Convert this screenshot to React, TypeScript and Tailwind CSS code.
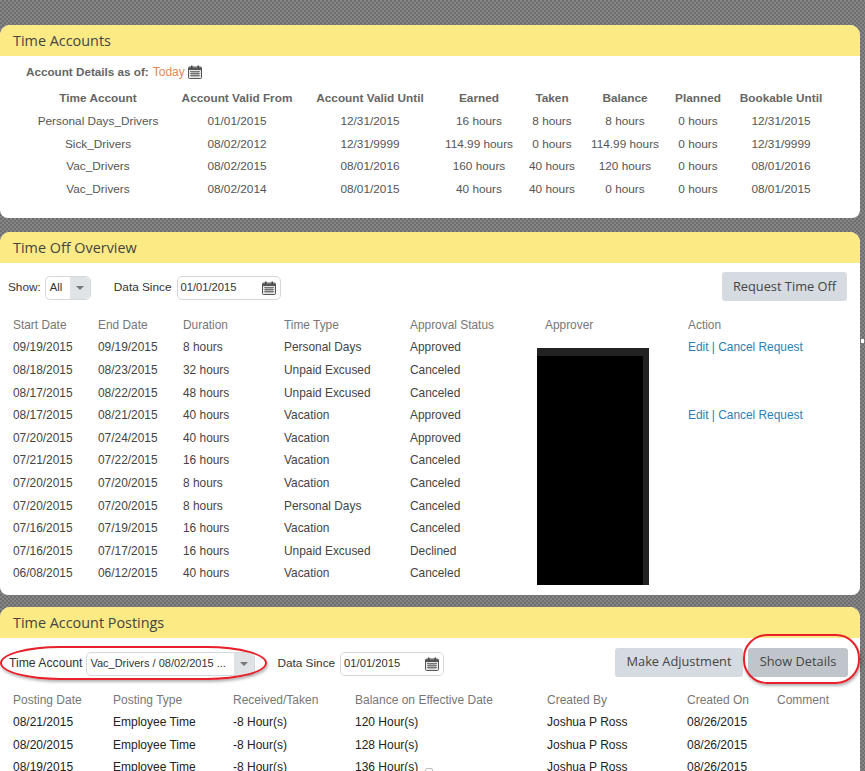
import React from "react";

const accountCols = ["Time Account", "Account Valid From", "Account Valid Until", "Earned", "Taken", "Balance", "Planned", "Bookable Until"];
const accounts = [
  ["Personal Days_Drivers", "01/01/2015", "12/31/2015", "16 hours", "8 hours", "8 hours", "0 hours", "12/31/2015"],
  ["Sick_Drivers", "08/02/2012", "12/31/9999", "114.99 hours", "0 hours", "114.99 hours", "0 hours", "12/31/9999"],
  ["Vac_Drivers", "08/02/2015", "08/01/2016", "160 hours", "40 hours", "120 hours", "0 hours", "08/01/2016"],
  ["Vac_Drivers", "08/02/2014", "08/01/2015", "40 hours", "40 hours", "0 hours", "0 hours", "08/01/2015"],
];

const requests = [
  ["09/19/2015", "09/19/2015", "8 hours", "Personal Days", "Approved", true],
  ["08/18/2015", "08/23/2015", "32 hours", "Unpaid Excused", "Canceled", false],
  ["08/17/2015", "08/22/2015", "48 hours", "Unpaid Excused", "Canceled", false],
  ["08/17/2015", "08/21/2015", "40 hours", "Vacation", "Approved", true],
  ["07/20/2015", "07/24/2015", "40 hours", "Vacation", "Approved", false],
  ["07/21/2015", "07/22/2015", "16 hours", "Vacation", "Canceled", false],
  ["07/20/2015", "07/20/2015", "8 hours", "Vacation", "Canceled", false],
  ["07/20/2015", "07/20/2015", "8 hours", "Personal Days", "Canceled", false],
  ["07/16/2015", "07/19/2015", "16 hours", "Vacation", "Canceled", false],
  ["07/16/2015", "07/17/2015", "16 hours", "Unpaid Excused", "Declined", false],
  ["06/08/2015", "06/12/2015", "40 hours", "Vacation", "Canceled", false],
] as const;

const postings = [
  ["08/21/2015", "-8 Hour(s)", "120 Hour(s)"],
  ["08/20/2015", "-8 Hour(s)", "128 Hour(s)"],
  ["08/19/2015", "-8 Hour(s)", "136 Hour(s)"],
];

const CalendarIcon = ({ className }: { className: string }) => (
  <svg viewBox="0 0 14 14" className={className}>
    <rect x="0.5" y="2" width="13" height="11.5" rx="1" fill="#e4e4e4" stroke="#555" />
    <rect x="1" y="2.5" width="12" height="2.5" fill="#555" />
    <rect x="3" y="0.5" width="1.5" height="3" fill="#444" />
    <rect x="9.5" y="0.5" width="1.5" height="3" fill="#444" />
    <path d="M2 6.5h10M2 8.5h10M2 10.5h10M4 6v6M6 6v6M8 6v6M10 6v6" stroke="#666" strokeWidth="0.8" />
  </svg>
);

const CardHeader = ({ title }: { title: string }) => (
  <div className="h-[31px] bg-[#fcea84] rounded-t-[10px] pl-[13px] flex items-center font-['Open_Sans',sans-serif] text-[14.4px] text-[#444]">
    {title}
  </div>
);

const DateInput = () => (
  <div className="w-[104px] h-[24px] border border-[#d5d8da] rounded-[5px] bg-white flex items-center justify-between pl-[3px] pr-[4px] text-[11.2px] text-[#333]">
    <span>01/01/2015</span>
    <CalendarIcon className="w-[14px] h-[14px]" />
  </div>
);

const Arrow = ({ className }: { className: string }) => (
  <div className={`h-full bg-[#dfe3e6] rounded-r-[5px] flex items-center justify-center ${className}`}>
    <div className="border-x-[4px] border-x-transparent border-t-[4px] border-t-[#777]" />
  </div>
);

const GreyButton = ({ label, className }: { label: string; className: string }) => (
  <button className={`h-[29px] rounded-[3px] font-['Open_Sans',sans-serif] text-[12.8px] text-[#444] ${className}`}>{label}</button>
);

export default function App() {
  return (
    <div className="h-[771px] w-[865px] overflow-hidden relative pt-[25px] pr-[5px] flex flex-col bg-[#7a7a7a] bg-[repeating-conic-gradient(#6e6e6e_0%_25%,#868686_0%_50%)] bg-[length:4px_4px] font-['Liberation_Sans',Arial,sans-serif]">
      <section className="h-[193px] shrink-0 bg-white rounded-t-[10px] rounded-b-[8px]">
        <CardHeader title="Time Accounts" />
        <div className="pl-[26px] pt-[8px] h-[31px] flex items-start gap-[4px] text-[12px] leading-[16px]">
          <span className="font-bold text-[#666] text-[11.7px]">Account Details as of:</span>
          <span className="text-[#e2885c]">Today</span>
          <CalendarIcon className="w-[14px] h-[14px] mt-[1px] -ml-[1px]" />
        </div>
        <div className="pl-[38px] text-[11.8px]">
          <div className="grid grid-cols-[120px_158px_108px_110px_36px_110px_36px_130px] h-[24px] items-center font-bold text-[#666]">
            {accountCols.map((c) => (
              <div key={c} className="flex justify-center whitespace-nowrap">{c}</div>
            ))}
          </div>
          {accounts.map((row, i) => (
            <div key={i} className="grid grid-cols-[120px_158px_108px_110px_36px_110px_36px_130px] h-[22.5px] items-center text-[#555]">
              {row.map((c, j) => (
                <div key={j} className="flex justify-center whitespace-nowrap">{c}</div>
              ))}
            </div>
          ))}
        </div>
      </section>

      <section className="h-[363px] shrink-0 mt-[14px] bg-white rounded-t-[10px] rounded-b-[8px] relative">
        <CardHeader title="Time Off Overview" />
        <div className="h-[51px] pb-[2px] flex items-center pl-[8px] pr-[13px] text-[11.8px] text-[#333]">
          <span>Show:</span>
          <div className="ml-[4px] w-[46px] h-[24px] border border-[#d5d8da] rounded-[5px] flex items-center justify-between">
            <span className="pl-[4px] text-[11.2px]">All</span>
            <Arrow className="w-[20px]" />
          </div>
          <span className="ml-[23px] mr-[5px]">Data Since</span>
          <DateInput />
          <GreyButton label="Request Time Off" className="ml-auto mb-[2px] w-[125px] bg-[#d5dbe0]" />
        </div>
        <div className="pl-[13px] pt-[1px] text-[11.9px]">
          <div className="grid grid-cols-[85px_85px_101px_126px_135px_143px_1fr] h-[22px] items-center text-[#777]">
            {["Start Date", "End Date", "Duration", "Time Type", "Approval Status", "Approver", "Action"].map((c) => (
              <div key={c}>{c}</div>
            ))}
          </div>
          {requests.map((r, i) => (
            <div key={i} className="grid grid-cols-[85px_85px_101px_126px_135px_143px_1fr] h-[22.6px] items-center text-[#444]">
              <div>{r[0]}</div>
              <div>{r[1]}</div>
              <div>{r[2]}</div>
              <div>{r[3]}</div>
              <div>{r[4]}</div>
              <div />
              <div className="text-[#2b7fb5]">{r[5] ? "Edit | Cancel Request" : ""}</div>
            </div>
          ))}
        </div>
        <div className="absolute left-[537px] top-[116px] w-[112px] h-[237px] bg-[#222]">
          <div className="mt-[8px] w-[106px] h-[229px] bg-black" />
        </div>
      </section>

      <section className="flex-1 mt-[12px] bg-white rounded-t-[10px] relative">
        <CardHeader title="Time Account Postings" />
        <div className="h-[51px] flex items-center pl-[9px] pr-[12px] text-[11.8px] text-[#333]">
          <span className="text-[12.2px]">Time Account</span>
          <div className="ml-[4px] w-[169px] h-[24px] border border-[#d5d8da] rounded-[5px] flex items-center justify-between">
            <span className="pl-[3px] whitespace-nowrap text-[11px]">Vac_Drivers / 08/02/2015 ...</span>
            <Arrow className="w-[20px]" />
          </div>
          <span className="ml-[22px] mr-[5px]">Data Since</span>
          <DateInput />
          <GreyButton label="Make Adjustment" className="ml-auto mb-[3px] w-[128px] bg-[#d5dbe0]" />
          <GreyButton label="Show Details" className="ml-[5px] mb-[3px] w-[100px] bg-[#bfc5ca]" />
        </div>
        <div className="pl-[13px] text-[12px]">
          <div className="grid grid-cols-[100px_120px_122px_192px_140px_90px_1fr] h-[22px] items-center text-[#777]">
            {["Posting Date", "Posting Type", "Received/Taken", "Balance on Effective Date", "Created By", "Created On", "Comment"].map((c) => (
              <div key={c}>{c}</div>
            ))}
          </div>
          {postings.map((p) => (
            <div key={p[0]} className="grid grid-cols-[100px_120px_122px_192px_140px_90px_1fr] h-[22.5px] items-center text-[#222]">
              <div>{p[0]}</div>
              <div>Employee Time</div>
              <div>{p[1]}</div>
              <div>{p[2]}</div>
              <div>Joshua P Ross</div>
              <div>08/26/2015</div>
              <div />
            </div>
          ))}
        </div>
        <div className="absolute left-0 top-[39px] w-[267px] h-[34px] rounded-[60px/17px] border-2 border-[#e8202a] shadow-[1px_2px_3px_rgba(0,0,0,0.3)]" />
        <div className="absolute left-[743px] top-[27px] w-[117px] h-[50px] rounded-[24px] border-2 border-[#e8202a] shadow-[1px_2px_3px_rgba(0,0,0,0.3)]" />
        <div className="absolute left-[425px] top-[161px] w-[8px] h-[8px] rounded-[2px] border border-[#bbb]" />
      </section>

      <div className="absolute left-[861px] top-[339px] w-[3px] h-[4px] bg-white" />
    </div>
  );
}
